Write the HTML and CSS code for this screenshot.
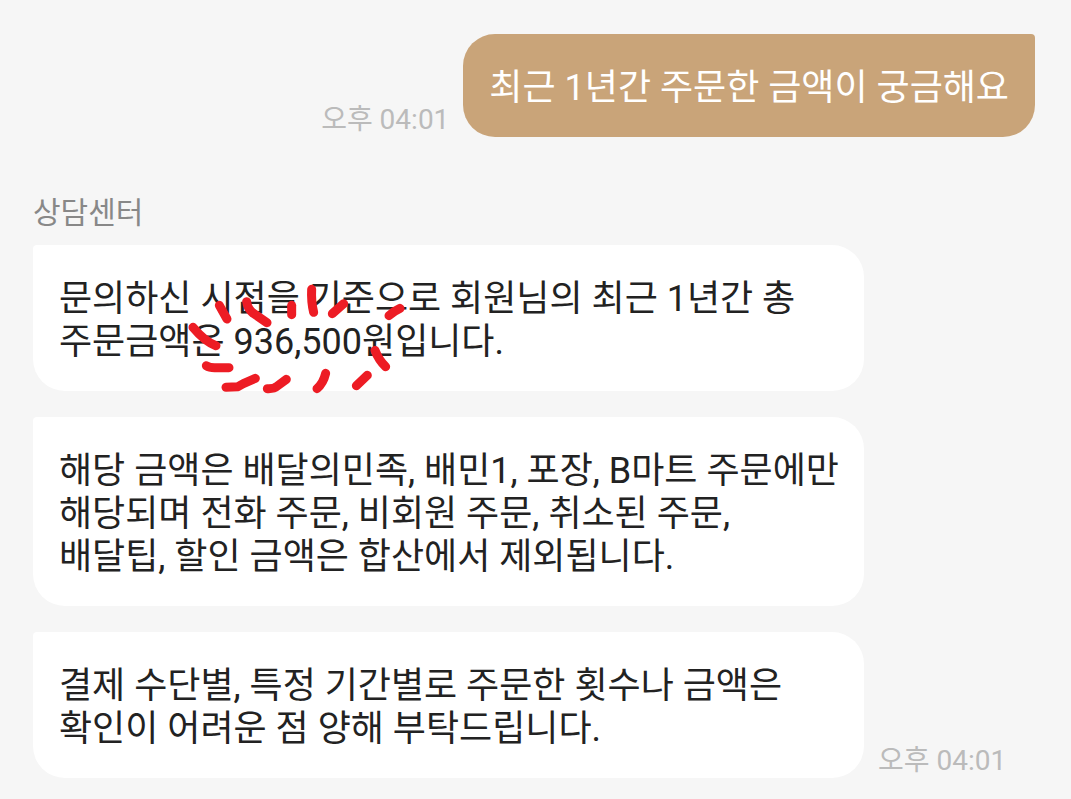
FILE: index.html
```html
<!DOCTYPE html>
<html lang="ko">
<head>
    <meta charset="UTF-8">
    <meta name="viewport" content="width=device-width, initial-scale=1.0">
    <title>상담센터</title>
    <link rel="stylesheet" href="styles.css">
</head>
<body>
    <main class="chat">
        <div class="row sent">
            <time class="time" datetime="16:01">오후 04:01</time>
            <p class="bubble">최근 1년간 주문한 금액이 궁금해요</p>
        </div>

        <section class="received">
            <h2 class="sender">상담센터</h2>
            <div class="row">
                <div class="messages">
                    <div class="bubble">
                        문의하신 시점을 기준으로 회원님의 최근 1년간 총 주문금액은 936,500원입니다.
                        <!-- red marks around the amount -->
                        <svg class="marks" viewBox="0 0 720 390" aria-hidden="true">
                            <path d="M118 106L141 147"/>
                            <path d="M200 95Q202 116 220 130L261 158"/>
                            <path d="M335 106V134"/>
                            <path d="M395 58Q393 95 401 127"/>
                            <path d="M457 131L491 101"/>
                            <path d="M627 137Q640 124 660 115"/>
                            <path d="M39 172Q75 215 108 227"/>
                            <path d="M79 287Q88 293 104 293H147"/>
                            <path d="M138 352L174 350L190 341L226 325"/>
                            <path d="M262 356Q282 357 292 348L319 328"/>
                            <path d="M437 310Q430 340 411 356"/>
                            <path d="M529 347L562 316"/>
                            <path d="M585 241Q596 270 617 290"/>
                        </svg>
                    </div>
                    <div class="bubble">해당 금액은 배달의민족, 배민1, 포장, B마트 주문에만 해당되며 전화 주문, 비회원 주문, 취소된 주문,<br>배달팁, 할인 금액은 합산에서 제외됩니다.</div>
                    <div class="bubble">결제 수단별, 특정 기간별로 주문한 횟수나 금액은 확인이 어려운 점 양해 부탁드립니다.</div>
                </div>
                <time class="time" datetime="16:01">오후 04:01</time>
            </div>
        </section>
    </main>
</body>
</html>
```
FILE: styles.css
```css
body {
    margin: 0;
    background: #f6f6f6;
    color: #222;
    font-family: Roboto, "Noto Sans CJK KR", sans-serif;
    font-size: 36px;
    line-height: 43px;
    word-break: keep-all;
}
.chat {
    padding: 34px 36px 21px 33px;
}
.row {
    display: flex;
    align-items: flex-end;
    gap: 14px;
}
.sent {
    justify-content: flex-end;
}
.bubble {
    position: relative;
    margin: 0;
    padding: 33px 20px 27px 26px;
    background: #fff;
    border-radius: 4px 32px 32px 32px;
}
.sent .bubble {
    padding: 33px 26px 27px;
    background: #c9a479;
    color: #fff;
    border-radius: 32px 4px 32px 32px;
}
.time {
    flex: none;
    color: #bbb;
    font-size: 28px;
    line-height: 34px;
}
.received {
    margin-top: 58px;
}
.sender {
    margin: 0 0 14px;
    color: #888;
    font-size: 30px;
    font-weight: 400;
    line-height: 36px;
}
.messages {
    display: flex;
    flex-direction: column;
    gap: 26px;
    max-width: 831px;
}
.marks {
    position: absolute;
    top: 25px;
    left: 147px;
    width: 240px;
    height: 130px;
    overflow: visible;
    fill: none;
    stroke: #ed1c24;
    stroke-width: 27;
    stroke-linecap: round;
    stroke-linejoin: round;
}
```
